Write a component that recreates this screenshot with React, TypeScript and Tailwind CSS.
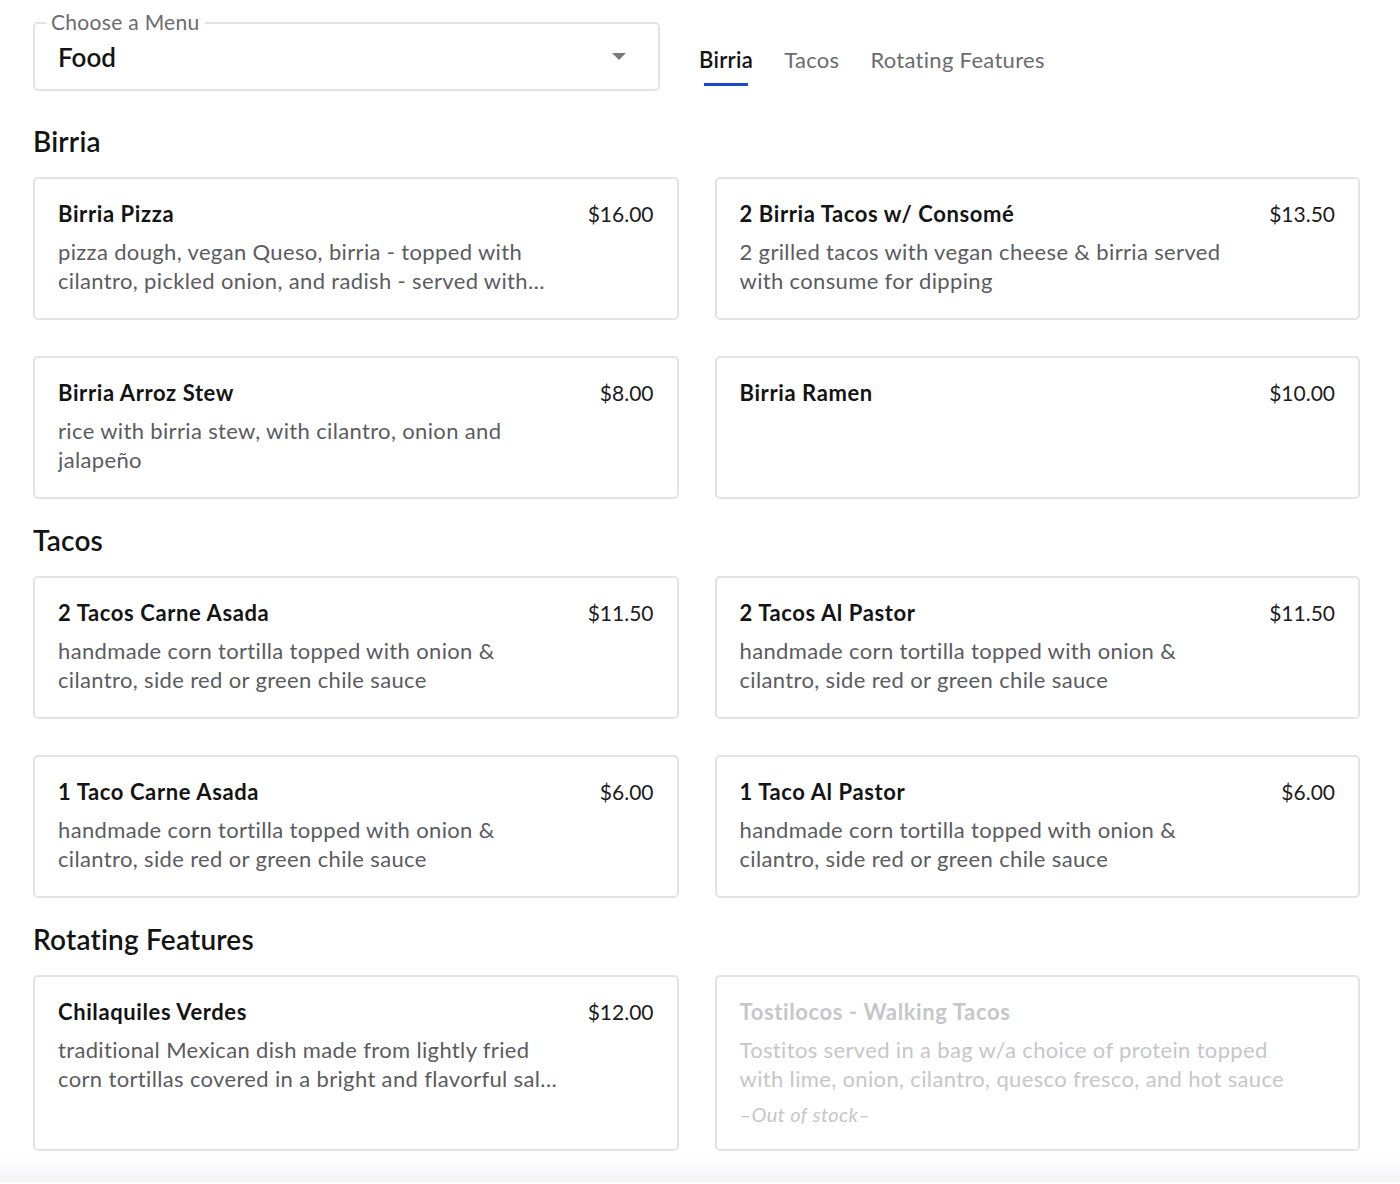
import React from 'react';

type Item = {
  name: string;
  price?: string;
  desc?: string;
  outOfStock?: boolean;
};

const sections: { title: string; items: Item[] }[] = [
  {
    title: 'Birria',
    items: [
      {
        name: 'Birria Pizza',
        price: '$16.00',
        desc: 'pizza dough, vegan Queso, birria - topped with cilantro, pickled onion, and radish - served with consomé for dipping',
      },
      {
        name: '2 Birria Tacos w/ Consomé',
        price: '$13.50',
        desc: '2 grilled tacos with vegan cheese & birria served with consume for dipping',
      },
      { name: 'Birria Arroz Stew', price: '$8.00', desc: 'rice with birria stew, with cilantro, onion and jalapeño' },
      { name: 'Birria Ramen', price: '$10.00' },
    ],
  },
  {
    title: 'Tacos',
    items: [
      {
        name: '2 Tacos Carne Asada',
        price: '$11.50',
        desc: 'handmade corn tortilla topped with onion & cilantro, side red or green chile sauce',
      },
      {
        name: '2 Tacos Al Pastor',
        price: '$11.50',
        desc: 'handmade corn tortilla topped with onion & cilantro, side red or green chile sauce',
      },
      {
        name: '1 Taco Carne Asada',
        price: '$6.00',
        desc: 'handmade corn tortilla topped with onion & cilantro, side red or green chile sauce',
      },
      {
        name: '1 Taco Al Pastor',
        price: '$6.00',
        desc: 'handmade corn tortilla topped with onion & cilantro, side red or green chile sauce',
      },
    ],
  },
  {
    title: 'Rotating Features',
    items: [
      {
        name: 'Chilaquiles Verdes',
        price: '$12.00',
        desc: 'traditional Mexican dish made from lightly fried corn tortillas covered in a bright and flavorful salsa verde',
      },
      {
        name: 'Tostilocos - Walking Tacos',
        desc: 'Tostitos served in a bag w/a choice of protein topped with lime, onion, cilantro, quesco fresco, and hot sauce',
        outOfStock: true,
      },
    ],
  },
];

function MenuCard({ item }: { item: Item }) {
  const muted = item.outOfStock;
  return (
    <div className="flex gap-[26px] rounded-[5px] border-2 border-[#e3e3e6] bg-white px-[23px] pt-[23px] pb-[23px]">
      <div className="min-w-0 flex-1">
        <p
          className={`text-[22px] leading-[24px] font-bold tracking-[0.6px] ${
            muted ? 'text-[#c6c6ca]' : 'text-[#141414]'
          }`}
        >
          {item.name}
        </p>
        {item.desc && (
          <p
            className={`mt-[11px] text-[22px] leading-[29px] tracking-[0.35px] ${
              muted ? 'max-w-[552px] text-[#c6c6ca]' : 'line-clamp-2 text-[#5b5b60]'
            }`}
          >
            {item.desc}
          </p>
        )}
        {muted && (
          <p className="mt-[9px] text-[20px] leading-[24px] tracking-[0.4px] italic text-[#c6c6ca]">–Out of stock–</p>
        )}
      </div>
      {item.price && <p className="shrink-0 text-[21px] leading-[24px] text-[#1c1c1c]">{item.price}</p>}
    </div>
  );
}

export default function App() {
  return (
    <div className="min-h-[1184px] w-[1400px] bg-white font-['Lato',sans-serif]">
      <div className="pl-[33px] pr-[40px] pt-[22px]">
        <div className="flex items-center">
          <div className="relative flex h-[69px] w-[627px] items-center rounded-[5px] border-2 border-[#e3e3e6] pl-[23px] pr-[32px]">
            <span className="absolute -top-[13px] left-[11px] bg-white px-[5px] text-[21px] leading-[22px] tracking-[0.3px] text-[#6b6b70]">
              Choose a Menu
            </span>
            <span className="flex-1 text-[26px] leading-[30px] font-semibold text-[#141414]">Food</span>
            <svg width="14" height="7" viewBox="0 0 14 7">
              <path d="M0 0h14L7 7z" fill="#7a7a7e" />
            </svg>
          </div>
          <div className="ml-[39px] flex gap-[31px] pt-[18px] text-[22px] leading-[28px] tracking-[0.3px]">
            <div className="flex flex-col items-center">
              <span className="font-semibold text-[#141414]">Birria</span>
              <span className="mt-[9px] h-[3px] w-[44px] bg-[#1d47c9]" />
            </div>
            <span className="text-[#6b6b70]">Tacos</span>
            <span className="text-[#6b6b70]">Rotating Features</span>
          </div>
        </div>

        {sections.map((s, i) => (
          <section key={s.title} className={i === 0 ? 'mt-[34px]' : 'mt-[25px]'}>
            <h2 className="mb-[20px] text-[28px] leading-[32px] font-semibold tracking-[0.2px] text-[#141414]">
              {s.title}
            </h2>
            <div className="grid grid-cols-2 gap-x-[36px] gap-y-[36px]">
              {s.items.map((item) => (
                <MenuCard key={item.name} item={item} />
              ))}
            </div>
          </section>
        ))}
      </div>
      <div className="mt-[6px] h-[25px] bg-gradient-to-b from-white to-[#f4f4f7]" />
    </div>
  );
}
